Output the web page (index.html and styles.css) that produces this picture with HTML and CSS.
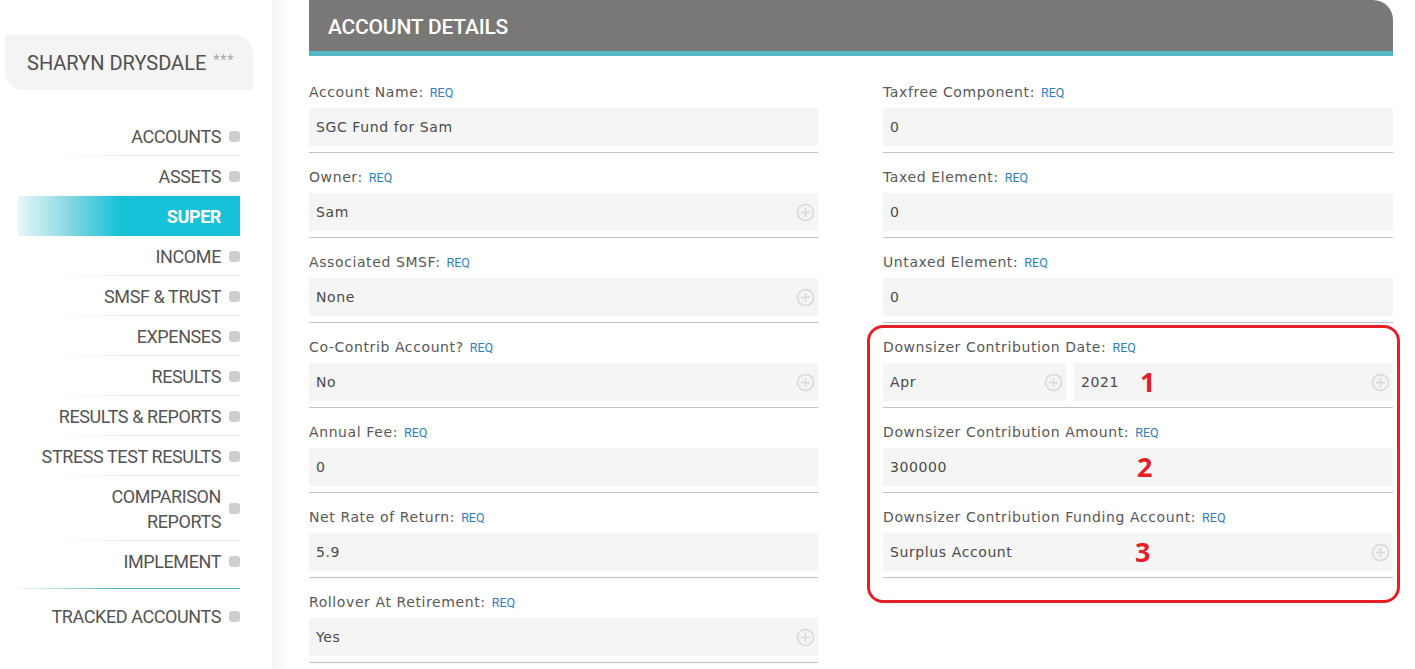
FILE: index.html
```html
<!DOCTYPE html>
<html>
<head>
<meta charset="utf-8">
<link rel="stylesheet" href="styles.css">
</head>
<body>
<div class="app">
  <aside class="sidebar">
    <div class="client">SHARYN DRYSDALE <span class="stars">***</span></div>
    <ul class="nav">
      <li class="nav-item"><span class="nav-text">ACCOUNTS</span><i class="dot"></i></li>
      <li class="nav-item"><span class="nav-text">ASSETS</span><i class="dot"></i></li>
      <li class="nav-item active"><span class="nav-text">SUPER</span></li>
      <li class="nav-item"><span class="nav-text">INCOME</span><i class="dot"></i></li>
      <li class="nav-item"><span class="nav-text">SMSF &amp; TRUST</span><i class="dot"></i></li>
      <li class="nav-item"><span class="nav-text">EXPENSES</span><i class="dot"></i></li>
      <li class="nav-item"><span class="nav-text">RESULTS</span><i class="dot"></i></li>
      <li class="nav-item"><span class="nav-text">RESULTS &amp; REPORTS</span><i class="dot"></i></li>
      <li class="nav-item"><span class="nav-text">STRESS TEST RESULTS</span><i class="dot"></i></li>
      <li class="nav-item two-line"><span class="nav-text">COMPARISON<br>REPORTS</span><i class="dot"></i></li>
      <li class="nav-item no-sep"><span class="nav-text">IMPLEMENT</span><i class="dot"></i></li>
    </ul>
    <div class="teal-sep"></div>
    <ul class="nav nav-tracked">
      <li class="nav-item no-sep"><span class="nav-text">TRACKED ACCOUNTS</span><i class="dot"></i></li>
    </ul>
  </aside>

  <main class="main">
    <div class="panel-head">ACCOUNT DETAILS</div>
    <div class="form">
      <div class="col">
        <div class="field">
          <div class="label">Account Name: <span class="req">REQ</span></div>
          <div class="box">SGC Fund for Sam</div>
        </div>
        <div class="field">
          <div class="label">Owner: <span class="req">REQ</span></div>
          <div class="box">Sam<svg class="plus" viewBox="0 0 18 18"><circle cx="9" cy="9" r="7.6"/><path d="M9 4.6v8.8M4.6 9h8.8"/></svg></div>
        </div>
        <div class="field">
          <div class="label">Associated SMSF: <span class="req">REQ</span></div>
          <div class="box">None<svg class="plus" viewBox="0 0 18 18"><circle cx="9" cy="9" r="7.6"/><path d="M9 4.6v8.8M4.6 9h8.8"/></svg></div>
        </div>
        <div class="field">
          <div class="label">Co-Contrib Account? <span class="req">REQ</span></div>
          <div class="box">No<svg class="plus" viewBox="0 0 18 18"><circle cx="9" cy="9" r="7.6"/><path d="M9 4.6v8.8M4.6 9h8.8"/></svg></div>
        </div>
        <div class="field">
          <div class="label">Annual Fee: <span class="req">REQ</span></div>
          <div class="box">0</div>
        </div>
        <div class="field">
          <div class="label">Net Rate of Return: <span class="req">REQ</span></div>
          <div class="box">5.9</div>
        </div>
        <div class="field">
          <div class="label">Rollover At Retirement: <span class="req">REQ</span></div>
          <div class="box">Yes<svg class="plus" viewBox="0 0 18 18"><circle cx="9" cy="9" r="7.6"/><path d="M9 4.6v8.8M4.6 9h8.8"/></svg></div>
        </div>
      </div>

      <div class="col">
        <div class="field">
          <div class="label">Taxfree Component: <span class="req">REQ</span></div>
          <div class="box">0</div>
        </div>
        <div class="field">
          <div class="label">Taxed Element: <span class="req">REQ</span></div>
          <div class="box">0</div>
        </div>
        <div class="field">
          <div class="label">Untaxed Element: <span class="req">REQ</span></div>
          <div class="box">0</div>
        </div>
        <div class="highlight">
          <div class="field">
            <div class="label">Downsizer Contribution Date: <span class="req">REQ</span></div>
            <div class="box-row">
              <div class="box box-month">Apr<svg class="plus" viewBox="0 0 18 18"><circle cx="9" cy="9" r="7.6"/><path d="M9 4.6v8.8M4.6 9h8.8"/></svg></div>
              <div class="box box-year">2021<span class="mark mark-1">1</span><svg class="plus" viewBox="0 0 18 18"><circle cx="9" cy="9" r="7.6"/><path d="M9 4.6v8.8M4.6 9h8.8"/></svg></div>
            </div>
          </div>
          <div class="field">
            <div class="label">Downsizer Contribution Amount: <span class="req">REQ</span></div>
            <div class="box">300000<span class="mark mark-2">2</span></div>
          </div>
          <div class="field">
            <div class="label">Downsizer Contribution Funding Account: <span class="req">REQ</span></div>
            <div class="box">Surplus Account<span class="mark mark-3">3</span><svg class="plus" viewBox="0 0 18 18"><circle cx="9" cy="9" r="7.6"/><path d="M9 4.6v8.8M4.6 9h8.8"/></svg></div>
          </div>
        </div>
      </div>
    </div>
  </main>
</div>
</body>
</html>
```

FILE: styles.css
```css
html, body {
  margin: 0;
  padding: 0;
  height: 100%;
  overflow: hidden;
  background: #fff;
}

.app {
  display: flex;
  min-height: 100%;
}

/* ---------- Sidebar ---------- */
.sidebar {
  width: 272px;
  flex: 0 0 272px;
  background: #fff;
  font-family: Roboto, "Liberation Sans", sans-serif;
  color: #545454;
}

.client {
  margin: 35px 0 0 5px;
  width: 248px;
  height: 55px;
  box-sizing: border-box;
  padding-left: 22px;
  display: flex;
  align-items: center;
  background: #f4f4f4;
  border-radius: 0 18px 0 18px;
  font-size: 20px;
  letter-spacing: 0;
  color: #505050;
}

.stars {
  font-size: 14px;
  color: #a8a8a8;
  margin-left: 7px;
  position: relative;
  top: -3px;
  letter-spacing: 1px;
}

.nav {
  list-style: none;
  margin: 26px 0 0 18px;
  padding: 0;
  width: 222px;
}

.nav-item {
  height: 40px;
  display: flex;
  align-items: center;
  justify-content: flex-end;
  gap: 8px;
  font-size: 18px;
  letter-spacing: -0.4px;
  background: linear-gradient(to right, rgba(236,236,236,0), #ececec 45%) no-repeat right bottom / 190px 1px;
}

.nav-text {
  text-align: right;
}

.nav-item.no-sep {
  background: none;
}

.nav-item.two-line {
  height: 65px;
  line-height: 25px;
}

.nav-item.active {
  background: linear-gradient(to right, #e8f7f9 0, #8ad9e4 22%, #17c1d7 46%, #17c1d7 100%);
  color: #fff;
  font-weight: 700;
  padding-right: 19px;
}

.dot {
  display: block;
  width: 11px;
  height: 11px;
  border-radius: 3px;
  background: #cfcfcf;
  flex: 0 0 11px;
}

.teal-sep {
  margin: 7px 0 0 13px;
  width: 227px;
  height: 1px;
  background: linear-gradient(to right, rgba(70,183,195,0), #46b7c3 45%);
}

.nav-tracked {
  margin-top: 7px;
}

/* ---------- Main ---------- */
.main {
  flex: 1;
  padding: 0 22px 0 37px;
  background: linear-gradient(to right, #f5f4f4 0, #fbfafa 10px, #fff 20px);
  font-family: "DejaVu Sans", Verdana, sans-serif;
}

.panel-head {
  border-bottom: 5px solid #52b8c3;
  background: #7a7876;
  border-top-right-radius: 20px;
  color: #fff;
  font-family: Roboto, "Liberation Sans", sans-serif;
  font-size: 21px;
  font-weight: 500;
  letter-spacing: -0.2px;
  padding-left: 19px;
  display: flex;
  align-items: center;
  padding-top: 2px;
  height: 49px;
}

.form {
  display: grid;
  grid-template-columns: 509px 510px;
  column-gap: 65px;
  padding-top: 25px;
}

.col {
  display: flex;
  flex-direction: column;
}

.field {
  padding-bottom: 6px;
  border-bottom: 1px solid #c2c2c2;
  margin-bottom: 13px;
}

.label {
  height: 20px;
  line-height: 20px;
  margin-bottom: 7px;
  padding-top: 1px;
  font-size: 14px;
  letter-spacing: 0.6px;
  color: #585858;
}

.label {
  height: 19px;
}

.req {
  font-family: Roboto, "Liberation Sans", sans-serif;
  font-size: 12.5px;
  letter-spacing: 0;
  color: #2f7fc1;
  margin-left: 1px;
}

.box {
  position: relative;
  height: 38px;
  box-sizing: border-box;
  background: #f5f5f5;
  display: flex;
  align-items: center;
  padding: 0 3px 0 7px;
  font-size: 14px;
  letter-spacing: 0.6px;
  color: #4a4a4a;
}

.box-row {
  display: flex;
  gap: 8px;
}

.box-month {
  width: 183px;
  flex: 0 0 183px;
}

.box-year {
  flex: 1;
}

.plus {
  width: 19px;
  height: 19px;
  margin-left: auto;
  fill: none;
  stroke: #dcdcdc;
  stroke-width: 1.7;
}

.highlight {
  margin: -11px -7px 0 -16px;
  padding: 8px 4px 9px 13px;
  border: 3px solid #e41f28;
  border-radius: 16px;
}

.mark {
  position: absolute;
  top: 50%;
  transform: translateY(-52%);
  font-family: "Open Sans", "Liberation Sans", sans-serif;
  font-weight: 700;
  font-size: 27px;
  letter-spacing: 0;
  color: #e41f28;
  line-height: 1;
}

.mark-1 { left: 66px; }
.mark-2 { left: 254px; }
.mark-3 { left: 252px; }
```
